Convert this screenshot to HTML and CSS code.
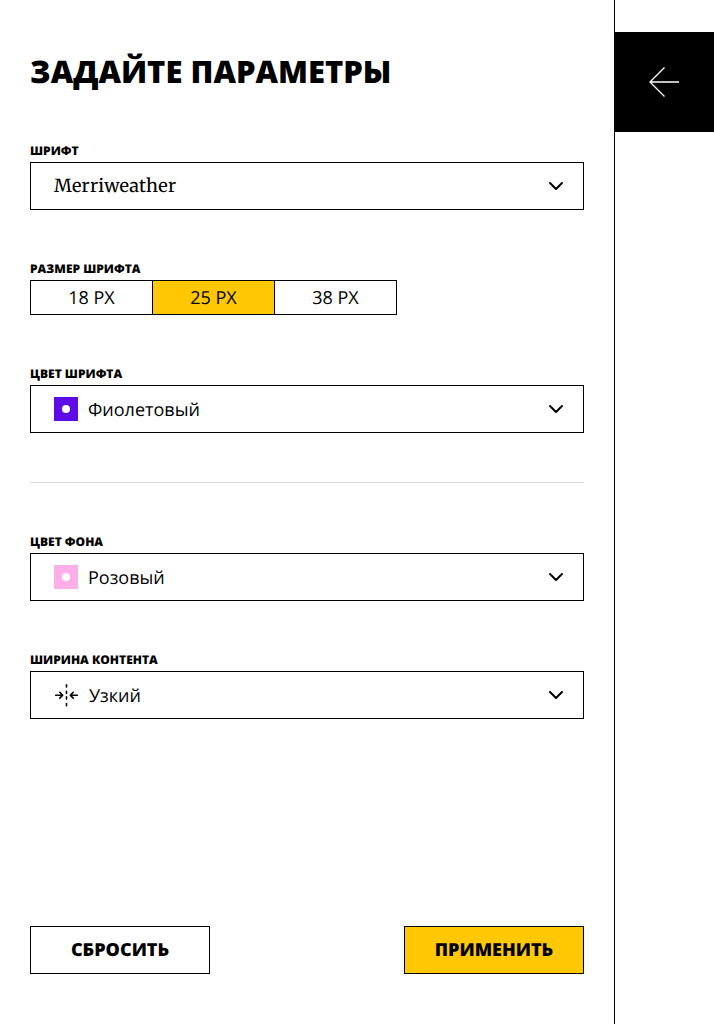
FILE: index.html
```html
<!DOCTYPE html>
<html lang="ru">
<head>
<meta charset="utf-8">
<title>Параметры статьи</title>
<link rel="stylesheet" href="styles.css">
</head>
<body>
<div class="layout">
  <form class="panel">
    <h1 class="title">ЗАДАЙТЕ ПАРАМЕТРЫ</h1>
    <div class="field">
      <span class="label">ШРИФТ</span>
      <div class="select"><span class="value value-serif">Merriweather</span>
        <svg class="chevron" width="16" height="10" viewBox="0 0 16 10"><path d="M2 2l6 6 6-6"/></svg></div>
    </div>
    <div class="field">
      <span class="label">РАЗМЕР ШРИФТА</span>
      <div class="sizes"><span class="size">18 PX</span><span class="size size-active">25 PX</span><span class="size">38 PX</span></div>
    </div>
    <div class="field field-last">
      <span class="label">ЦВЕТ ШРИФТА</span>
      <div class="select"><span class="swatch violet"></span><span class="value">Фиолетовый</span>
        <svg class="chevron" width="16" height="10" viewBox="0 0 16 10"><path d="M2 2l6 6 6-6"/></svg></div>
    </div>
    <hr class="divider">
    <div class="field">
      <span class="label">ЦВЕТ ФОНА</span>
      <div class="select"><span class="swatch pink"></span><span class="value">Розовый</span>
        <svg class="chevron" width="16" height="10" viewBox="0 0 16 10"><path d="M2 2l6 6 6-6"/></svg></div>
    </div>
    <div class="field">
      <span class="label">ШИРИНА КОНТЕНТА</span>
      <div class="select"><svg class="narrow" width="25" height="24" viewBox="0 0 25 24"><path d="M12.500 1.700v2.200M12.500 8.300v2.200M12.500 13.900v2.200M12.500 20.500v2.200"/><path d="M1.700 12.200h6.800M5.800 9.300l2.900 2.900-2.900 2.900M23.300 12.200h-6.800M19.200 9.300l-2.900 2.900 2.900 2.900"/></svg><span class="value">Узкий</span>
        <svg class="chevron" width="16" height="10" viewBox="0 0 16 10"><path d="M2 2l6 6 6-6"/></svg></div>
    </div>
    <div class="actions"><button class="button" type="reset">СБРОСИТЬ</button><button class="button button-apply" type="button">ПРИМЕНИТЬ</button></div>
  </form>
  <button class="toggle" type="button"><svg class="arrow" width="30" height="30" viewBox="0 0 30 30"><path d="M30 15H1M15.500.5 1 15l14.500 14.500"/></svg></button>
</div>
</body>
</html>
```
FILE: styles.css
```css
* { box-sizing: border-box; }
body { margin: 0; background: #fff; color: #000; font-family: "Open Sans", sans-serif; text-rendering: geometricPrecision; }
.layout { display: flex; align-items: flex-start; height: 1024px; overflow: hidden; }
.panel { display: flex; flex-direction: column; width: 615px; height: 1024px; padding: 50px 30px; border-right: 1px solid #000; }
.title { margin: 0 0 50px; font-size: 31px; line-height: 44px; font-weight: 800; white-space: nowrap; }
.field { margin-bottom: 52px; }
.field-last { margin-bottom: 49px; }
.label { display: block; height: 18px; font-size: 12px; line-height: 14px; font-weight: 800; }
.select { display: flex; align-items: center; height: 48px; padding: 0 19px 0 23px; border: 1px solid #000; }
.value { padding-top: 2px; font-size: 18px; line-height: 24px; }
.value-serif { padding-top: 0; font-family: Merriweather, "Noto Serif", "DejaVu Serif", serif; letter-spacing: 0.25px; }
.swatch { display: flex; align-items: center; justify-content: center; width: 24px; height: 24px; margin-right: 10px; }
.swatch::before { content: ""; width: 8px; height: 8px; border-radius: 50%; background: #fff; }
.violet { background: #5f0be7; }
.pink { background: #feafe8; }
.chevron { margin-left: auto; fill: none; stroke: #000; stroke-width: 2; stroke-linecap: round; stroke-linejoin: round; }
.narrow { margin-right: 10px; fill: none; stroke: #000; stroke-width: 1.6; stroke-linecap: round; stroke-linejoin: round; }
.sizes { display: flex; width: 367px; height: 35px; border: 1px solid #000; }
.size { flex: 1; padding-top: 1px; text-align: center; font-size: 18px; line-height: 32px; }
.size + .size { border-left: 1px solid #000; }
.size-active { background: #ffc802; }
.divider { width: 100%; height: 1px; margin: 0 0 52px; border: 0; background: #d7d7d7; }
.actions { display: flex; justify-content: space-between; margin-top: auto; }
.button { width: 180px; height: 48px; padding: 0; border: 1px solid #000; background: #fff; color: #000; font: 800 18px/24px "Open Sans", sans-serif; text-rendering: inherit; }
.button-apply { background: #ffc802; }
.toggle { display: flex; align-items: center; justify-content: center; flex: 1; height: 100px; margin: 32px 0 0; padding: 0 2px 0 0; border: 0; background: #000; }
.arrow { fill: none; stroke: #fff; stroke-width: 1.3; }
```
